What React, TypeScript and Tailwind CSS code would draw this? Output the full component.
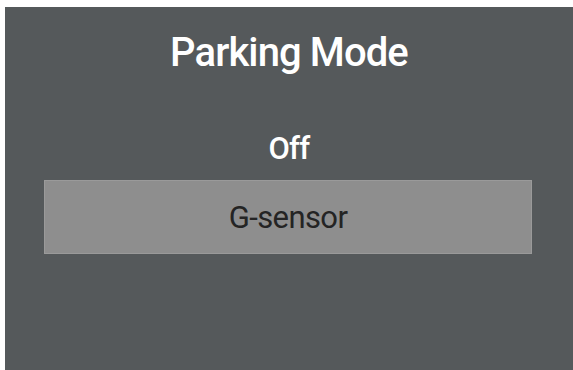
export default function App() {
  return (
    <div className="h-[370px] w-[573px] bg-white pl-[5px] pt-[7px]">
      <div
        className="flex h-full w-full flex-col items-center bg-[#55595b] pt-[26px]"
        style={{ fontFamily: "Roboto, 'Liberation Sans', sans-serif" }}
      >
        <h1 className="text-[40px] leading-none font-medium tracking-[-0.9px] text-white">Parking Mode</h1>
        <div className="mt-[60px] text-[31px] leading-none font-medium tracking-[-0.8px] text-white">Off</div>
        <div className="mt-[16px] ml-[-2px] flex h-[74px] w-[488px] items-center justify-center border border-[#9a9a9a] bg-[#8e8e8e]">
          <span className="text-[31px] leading-none tracking-[-0.6px] text-[#242424]">G-sensor</span>
        </div>
      </div>
    </div>
  );
}
